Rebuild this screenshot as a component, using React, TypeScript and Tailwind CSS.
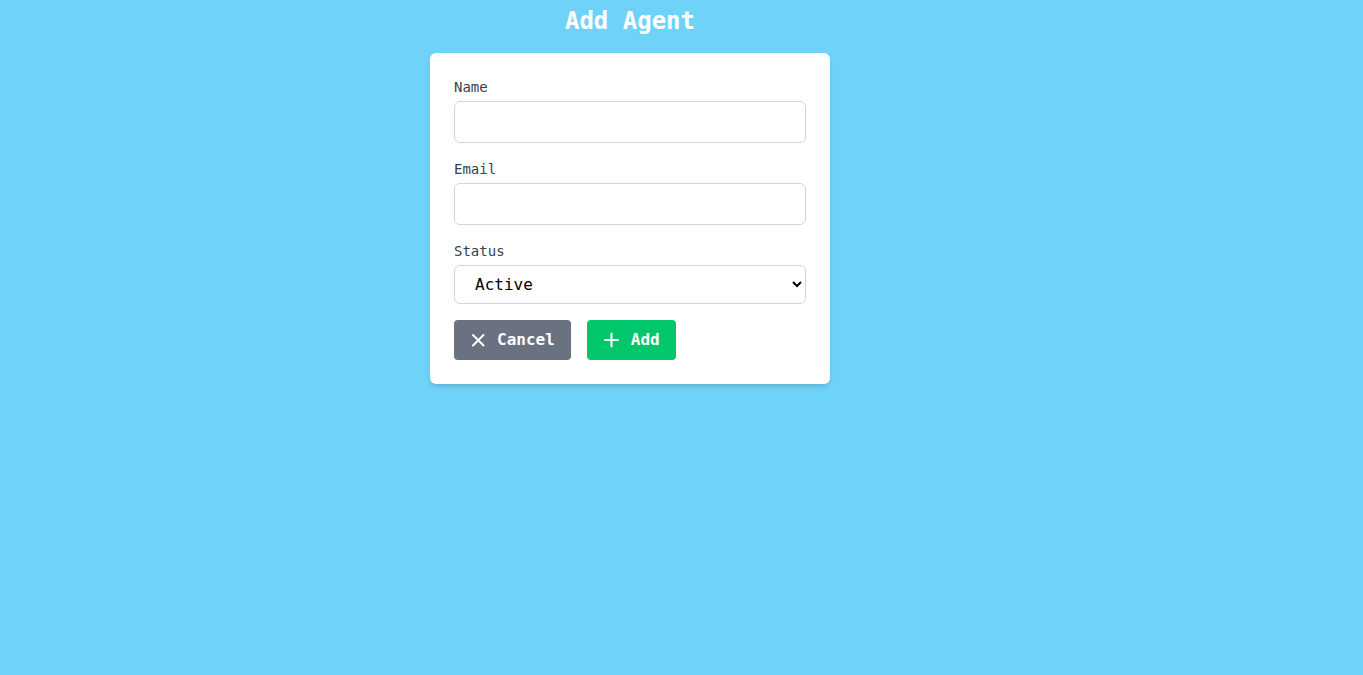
import { useState } from "react";

const mono = { fontFamily: '"DejaVu Sans Mono", "Liberation Mono", monospace' };

const XIcon = () => (
  <svg viewBox="0 0 16 16" className="h-4 w-4" fill="none" stroke="currentColor" strokeWidth={2} strokeLinecap="round">
    <path d="M3 3 L13.5 13.5 M13.5 3 L3 13.5" />
  </svg>
);

const PlusIcon = () => (
  <svg viewBox="0 0 16 16" className="h-4 w-4" fill="none" stroke="currentColor" strokeWidth={2} strokeLinecap="round">
    <path d="M8.5 1.5 V14.5 M2 8 H15" />
  </svg>
);

const Field = ({ label, children }: { label: string; children: React.ReactNode }) => (
  <div className="mb-4">
    <label className="mb-1 block text-sm leading-5 text-gray-700">{label}</label>
    {children}
  </div>
);

export default function App() {
  const [name, setName] = useState("");
  const [email, setEmail] = useState("");
  const [status, setStatus] = useState("active");

  return (
    <div className="min-h-screen bg-[#6fd3f9]" style={mono}>
      <div className="w-[1260px] pt-[5px]">
        <h1 className="mb-4 text-center text-2xl leading-8 font-bold text-white">Add Agent</h1>
        <div className="mx-auto w-[400px] rounded-md bg-white p-6 shadow-md">
          <Field label="Name">
            <input
              value={name}
              onChange={(e) => setName(e.target.value)}
              className="block h-[42px] w-full rounded-md border border-gray-300 px-3 text-base outline-none"
            />
          </Field>
          <Field label="Email">
            <input
              type="email"
              value={email}
              onChange={(e) => setEmail(e.target.value)}
              className="block h-[42px] w-full rounded-md border border-gray-300 px-3 text-base outline-none"
            />
          </Field>
          <Field label="Status">
            <select
              value={status}
              onChange={(e) => setStatus(e.target.value)}
              className="block h-[39px] w-full rounded-md border border-gray-300 bg-white px-4 text-base text-black outline-none"
              style={mono}
            >
              <option value="active">Active</option>
              <option value="inactive">Inactive</option>
            </select>
          </Field>
          <div className="flex gap-4">
            <button className="flex h-10 items-center gap-[11px] rounded bg-gray-500 px-4 text-base font-bold text-white">
              <XIcon />
              Cancel
            </button>
            <button className="flex h-10 items-center gap-3 rounded bg-[#02c66b] px-4 text-base font-bold text-white">
              <PlusIcon />
              Add
            </button>
          </div>
        </div>
      </div>
    </div>
  );
}
